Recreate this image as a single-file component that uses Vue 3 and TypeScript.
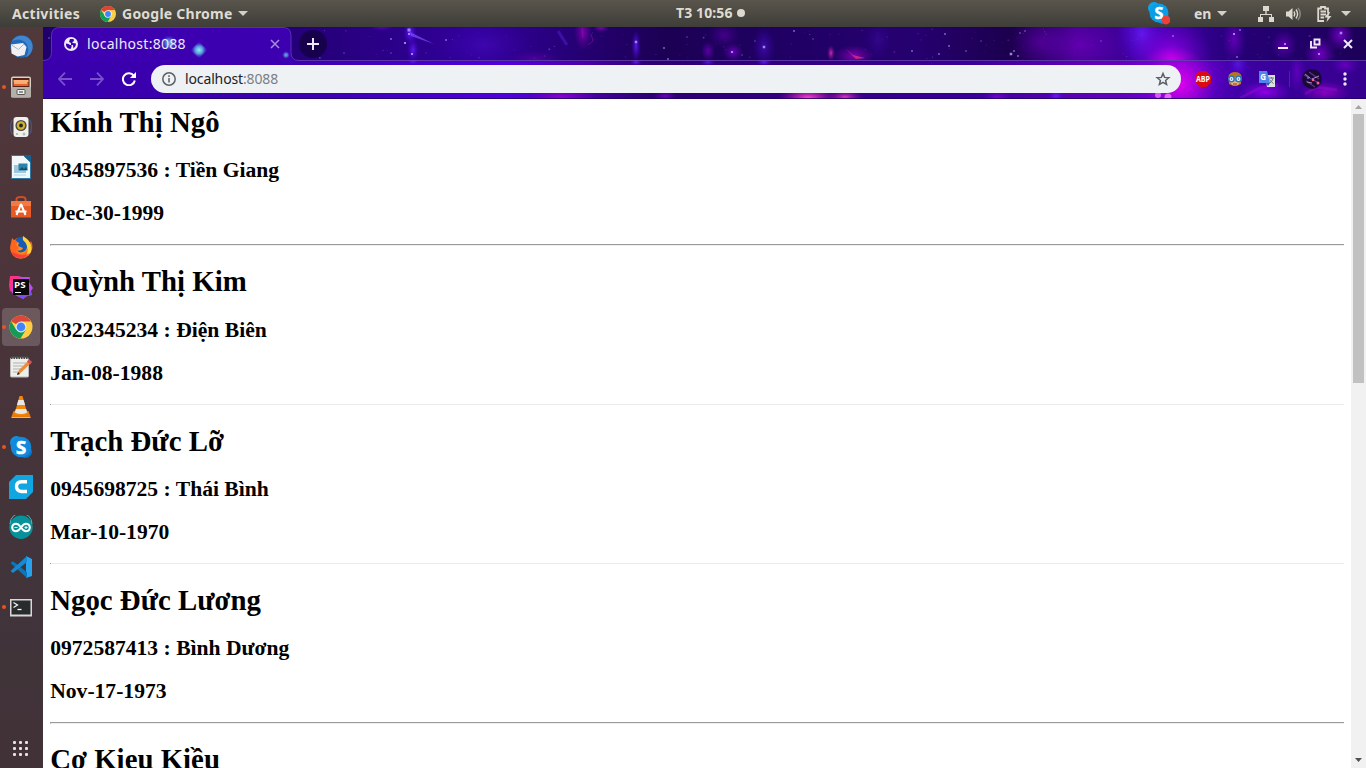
<script setup lang="ts">
interface Person {
  name: string
  phone: string
  city: string
  born: string
  faint: boolean
}

const people: Person[] = [
  { name: 'Kính Thị Ngô', phone: '0345897536', city: 'Tiền Giang', born: 'Dec-30-1999', faint: false },
  { name: 'Quỳnh Thị Kim', phone: '0322345234', city: 'Điện Biên', born: 'Jan-08-1988', faint: true },
  { name: 'Trạch Đức Lỡ', phone: '0945698725', city: 'Thái Bình', born: 'Mar-10-1970', faint: true },
  { name: 'Ngọc Đức Lương', phone: '0972587413', city: 'Bình Dương', born: 'Nov-17-1973', faint: false },
  { name: 'Cơ Kieu Kiều', phone: '', city: '', born: '', faint: false },
]

interface Glow { x: number; y: number; rx: number; ry: number; c: string; o: number }

const stripGlows: Glow[] = [
  { x: 382, y: 26, rx: 12, ry: 5, c: 'violet', o: 0.6 },
  { x: 410, y: 33, rx: 7, ry: 12, c: 'blue', o: 0.9 },
  { x: 413, y: 50, rx: 6, ry: 12, c: 'blue', o: 0.8 },
  { x: 485, y: 45, rx: 50, ry: 24, c: 'blue', o: 0.2 },
  { x: 535, y: 60, rx: 25, ry: 10, c: 'magenta', o: 0.2 },
  { x: 583, y: 32, rx: 9, ry: 18, c: 'magenta', o: 0.45 },
  { x: 601, y: 28, rx: 8, ry: 4, c: 'magenta', o: 0.5 },
  { x: 636, y: 46, rx: 5, ry: 16, c: 'blue', o: 0.8 },
  { x: 708, y: 51, rx: 7, ry: 10, c: 'violet', o: 0.5 },
  { x: 724, y: 35, rx: 16, ry: 13, c: 'violet', o: 0.3 },
  { x: 733, y: 52, rx: 10, ry: 9, c: 'violet', o: 0.6 },
  { x: 764, y: 47, rx: 12, ry: 20, c: 'blue', o: 0.4 },
  { x: 831, y: 53, rx: 4, ry: 8, c: 'pink', o: 0.7 },
  { x: 854, y: 56, rx: 20, ry: 11, c: 'magenta', o: 0.5 },
  { x: 878, y: 40, rx: 15, ry: 20, c: 'blue', o: 0.2 },
  { x: 1040, y: 42, rx: 28, ry: 22, c: 'violet', o: 0.3 },
  { x: 1080, y: 45, rx: 42, ry: 28, c: 'violet', o: 0.35 },
  { x: 1142, y: 34, rx: 26, ry: 34, c: 'blue', o: 0.8 },
  { x: 1170, y: 55, rx: 42, ry: 36, c: 'violet', o: 0.9 },
  { x: 1172, y: 60, rx: 28, ry: 14, c: 'magenta', o: 0.8 },
  { x: 1234, y: 40, rx: 12, ry: 24, c: 'violet', o: 0.5 },
  { x: 1284, y: 45, rx: 13, ry: 15, c: 'violet', o: 0.5 },
  { x: 1320, y: 54, rx: 16, ry: 18, c: 'violet', o: 0.65 },
  { x: 1340, y: 35, rx: 14, ry: 16, c: 'violet', o: 0.65 },
]

const toolbarGlows: Glow[] = [
  { x: 413, y: 61, rx: 6, ry: 4, c: 'blue', o: 0.8 },
  { x: 636, y: 62, rx: 6, ry: 4, c: 'blue', o: 0.9 },
  { x: 562, y: 97, rx: 35, ry: 10, c: 'magenta', o: 0.45 },
  { x: 708, y: 62, rx: 8, ry: 5, c: 'blue', o: 0.7 },
  { x: 764, y: 62, rx: 8, ry: 4, c: 'blue', o: 0.9 },
  { x: 665, y: 96, rx: 12, ry: 5, c: 'violet', o: 0.6 },
  { x: 808, y: 98, rx: 30, ry: 12, c: 'pink', o: 1 },
  { x: 845, y: 97, rx: 18, ry: 7, c: 'pink', o: 0.8 },
  { x: 997, y: 97, rx: 14, ry: 7, c: 'violet', o: 0.6 },
  { x: 1056, y: 96, rx: 9, ry: 7, c: 'blue', o: 0.9 },
  { x: 1172, y: 78, rx: 60, ry: 46, c: 'violet', o: 1 },
  { x: 1180, y: 84, rx: 36, ry: 36, c: 'magenta', o: 1 },
  { x: 1265, y: 92, rx: 26, ry: 12, c: 'violet', o: 0.9 },
  { x: 1238, y: 64, rx: 11, ry: 16, c: 'blue', o: 0.6 },
  { x: 1325, y: 92, rx: 26, ry: 12, c: 'magenta', o: 0.5 },
  { x: 1297, y: 72, rx: 8, ry: 22, c: 'violet', o: 0.4 },
  { x: 1345, y: 65, rx: 14, ry: 10, c: 'violet', o: 0.5 },
]

const brightStars: [number, number, number][] = [
  [409, 30, 3], [409, 34, 2], [412, 54, 2], [391, 53, 1], [405, 43, 2], [446, 40, 1.5], [391, 39, 1.5],
  [636, 42, 2.5], [664, 48, 1.5], [732, 52, 2], [742, 55, 1], [755, 41, 1], [668, 59, 1.5], [687, 37, 1],
  [764, 47, 2.5], [794, 31, 1.5], [813, 39, 1], [912, 51, 1.5], [945, 34, 1.5], [949, 46, 1.5],
  [939, 54, 1.5], [966, 51, 1.2], [981, 41, 1], [1011, 54, 2.5], [1014, 51, 1.5], [1018, 56, 1.5],
  [1025, 31, 1.2], [1020, 33, 1.2], [1234, 34, 2], [1240, 30, 1.5], [1237, 57, 1.5], [1173, 36, 1.5],
  [1285, 44, 2], [1341, 33, 2.5], [1319, 54, 2], [1101, 41, 1], [49, 38, 1.2], [344, 53, 1],
]

// Small deterministic generator for the faint star dust in the tab strip.
let seed = 71
function rnd(): number {
  seed = (seed * 16807) % 2147483647
  return seed / 2147483647
}
const dust = Array.from({ length: 130 }, () => ({
  x: 300 + rnd() * 1066,
  y: 28 + rnd() * 31,
  s: rnd() > 0.85 ? 1.6 : 1,
  c: rnd() > 0.7 ? '#7b5bd8' : '#6a22b8',
  o: 0.2 + rnd() * 0.5,
}))

const gridDots = [0, 1, 2, 3, 4, 5, 6, 7, 8]
</script>

<template>
  <div class="desktop">
    <header class="topbar">
      <span class="activities">Activities</span>
      <svg class="chrome-small" width="16" height="16" viewBox="0 0 24 24">
        <circle cx="12" cy="12" r="12" fill="#f9cf4a" />
        <path d="M12 12 1.6 6A12 12 0 0 1 22.4 6L12 6.4Z" fill="#db4437" />
        <path d="M1.6 6A12 12 0 0 0 11.5 24l5.3-9.2L12 12 7 14.5Z" fill="#0f9d58" />
        <circle cx="12" cy="12" r="5.6" fill="#f4f4f4" /><circle cx="12" cy="12" r="4.4" fill="#4285f4" />
      </svg>
      <span class="appname">Google Chrome</span>
      <i class="caret"></i>
      <div class="clock"><span>T3 10:56</span><i></i></div>
      <div class="tray">
        <svg class="t-skype" width="22" height="23" viewBox="0 0 22 23">
          <circle cx="6" cy="6" r="6" fill="#0aa5ec" /><circle cx="15" cy="16" r="6" fill="#0a83d8" />
          <circle cx="11" cy="11" r="9.5" fill="#0b9de6" />
          <text x="11" y="16.5" text-anchor="middle" class="ic" font-size="16" fill="#fff" stroke="#fff" stroke-width=".5">S</text>
          <circle cx="18" cy="18" r="4.4" fill="#ee4037" />
        </svg>
        <span class="lang">en</span>
        <i class="caret t-c1"></i>
        <svg class="t-net" width="16" height="16" viewBox="0 0 16 16" fill="#dcd8d0">
          <path d="M5 0h6v5H8.7v3H14v3h2v5h-5v-5h2V9H3v2h2v5H0v-5h2V8h5.3V5H5Z" />
        </svg>
        <svg class="t-vol" width="16" height="14" viewBox="0 0 16 14" fill="none" stroke="#dcd8d0" stroke-width="1.4">
          <path d="M0 4.5h2.5L6.5 1v12L2.5 9.5H0Z" fill="#dcd8d0" stroke="none" />
          <path d="M8 4.5q1.6 2.5 0 5M10 2.5q3.2 4.500 0 9" /><path d="M12 .8q4.500 6.200 0 12.400" stroke="#8f8b84" />
        </svg>
        <svg class="t-bat" width="15" height="16" viewBox="0 0 15 16" fill="none" stroke="#dcd8d0" stroke-width="1.8">
          <path d="M7 15H1.200V2.500H4V1h4v1.500h3V7M3.500 5.500H9M3.500 8.500H9M3.500 11.500H7" />
          <path d="M11.500 6 7.500 11.500h3L9.500 16l5-6h-3L13 6Z" fill="#dcd8d0" stroke="none" />
        </svg>
        <i class="caret t-c2"></i>
      </div>
    </header>

    <div class="body">
      <nav class="dock">
        <div class="slot">
          <svg viewBox="0 0 24 24">
            <circle cx="12.500" cy="11.500" r="11.300" fill="#2368b5" />
            <path d="M3 6Q9-2 18 2q6 4 5.500 11-1 7-7 9.500Q22 15 17 8 11 2 3 6Z" fill="#4087d2" />
            <path d="M2 9.500 14 8l3.500 4-2 8-7 1.500-6-3Z" fill="#f1f1f4" /><path d="m2.500 10 7 4.500L15 9" fill="none" stroke="#aab4c6" />
          </svg>
        </div>
        <div class="slot run">
          <svg viewBox="0 0 24 24">
            <rect x="2" y="1.500" width="20" height="21" rx="2" fill="#d5d2cc" /><rect x="3.500" y="3" width="17" height="10" fill="#54241a" />
            <path d="M4.500 5h15v2h-15Z" fill="#ffae73" /><path d="M4.500 7h15v4h-15Z" fill="#e96420" /><path d="M5 7.500h13v1H5Z" fill="#fff0d8" />
            <rect x="2" y="12" width="20" height="10.500" rx="1" fill="#b3b0aa" />
            <rect x="8" y="14.500" width="8" height="5" rx="1" fill="#eee" stroke="#57544f" /><path d="M10 17h4" stroke="#333" />
          </svg>
        </div>
        <div class="slot">
          <svg viewBox="0 0 24 24">
            <path d="M3 5q-3 7 0 14M21 5q3 7 0 14" fill="none" stroke="#46587c" stroke-width="1.300" />
            <rect x="4.500" y="2" width="15" height="20" rx="3" fill="#efefec" /><circle cx="12" cy="10.500" r="5.600" fill="#4c4b47" />
            <circle cx="12" cy="10.500" r="4.200" fill="#d2b32d" /><circle cx="12" cy="10.500" r="1.900" fill="#252525" />
            <circle cx="8" cy="19" r="1" fill="#aaa" /><circle cx="15" cy="19" r="1.500" fill="#bbb" />
          </svg>
        </div>
        <div class="slot">
          <svg viewBox="0 0 24 24">
            <path d="M2.500 .5h12L21.500 7v16.500h-19Z" fill="#f2f7fa" stroke="#2c78a6" />
            <path d="M14.500 0H22v8Z" fill="#17618f" />
            <rect x="5" y="10" width="12" height="8" fill="#9cc7dd" /><rect x="9.500" y="8.500" width="9" height="7" fill="#2b83a9" />
            <path d="m10 15 3-3 2 2 2-2 1.500 3Z" fill="#174e6e" /><path d="M5 20h12" stroke="#b5d3e2" />
          </svg>
        </div>
        <div class="slot">
          <svg viewBox="0 0 24 24">
            <path d="M7.500 7V4q0-2 4.500-2t4.500 2v3" fill="none" stroke="#d34e1e" stroke-width="2" />
            <path d="M2 6h20v6H2Z" fill="#f27b43" /><path d="M2 11h20v11.500H2Z" fill="#e75a24" />
            <path d="m12 9-4.500 11M12 9l4.500 11M6.500 16.500h11" fill="none" stroke="#fff" stroke-width="2" />
          </svg>
        </div>
        <div class="slot">
          <svg viewBox="0 0 24 24">
            <circle cx="12" cy="13" r="10.500" fill="#ff8a19" />
            <path d="M2 8 3 3l3 3 4-1-3 5 3 3-3 3q4 5 9 2 3-3 4-8l2-4q3 6 0 11-4 6-10 6.500-6 0-9-4.500-3-5-1-11Z" fill="#ff641f" />
            <path d="M14 1q8 5 8.500 12 0 7-6.500 9 5-7 1-12-5-4-3-9Z" fill="#ffd23c" />
            <path d="M6 5q4-4 8-3-1 3 2 5 4 5 0 9-5 3-8-.5 5 .5 6-2.500l-5-2 1-3Z" fill="#145cb8" /><path d="M2 17q3 6 10 6 6 0 9-5-7 4-13 1Z" fill="#fb3147" opacity=".8" />
          </svg>
        </div>
        <div class="slot">
          <svg viewBox="0 0 24 24">
            <path d="M1 1 9 1l4 1 8 0-1 5 4 6-2 3 1 4-5 1-4 3-10-5-2-3 0-5Z" fill="#bd4bed" />
            <path d="m1 1 8 0 3 3-8 8-3 5-1-7Z" fill="#fb318c" /><path d="m9 21 11-8 3 7-5 1-4 3Z" fill="#7650f7" />
            <rect x="4" y="4" width="16" height="16" fill="#0b080c" />
            <text x="5" y="12.800" class="ic" font-size="9" textLength="11.500" lengthAdjust="spacingAndGlyphs" fill="#fff">PS</text><path d="M6 17.500h6" stroke="#fff" />
          </svg>
        </div>
        <div class="slot run active">
          <svg viewBox="0 0 24 24">
            <circle cx="12" cy="12" r="11.500" fill="#ffce44" />
            <path d="M12 12 2 6.200A11.500 11.500 0 0 1 22 6.500H12Z" fill="#d8493c" />
            <path d="M2 6.200A11.500 11.500 0 0 0 11.500 23.500l5.300-8.700L12 12 7 14.500Z" fill="#169b57" />
            <circle cx="12" cy="12" r="5.400" fill="#eef3fb" /><circle cx="12" cy="12" r="4.400" fill="#4285f4" />
          </svg>
        </div>
        <div class="slot">
          <svg viewBox="0 0 24 24">
            <rect x="1.500" y="3" width="18" height="19" rx="1" fill="#eeeeeb" stroke="#bbb" />
            <path d="M2 2.500h18" stroke="#4a4a48" stroke-width="3" stroke-dasharray="1.500 1" />
            <path d="M4 8h13M4 11h10M4 14h8M4 17h6" stroke="#b1b1ae" />
            <path d="m8 20 2-5L20 5l2.500 2.500-11 10.500Z" fill="#ef8b37" /><path d="m18 6.500 2-2.500 3 3-2 2.500Z" fill="#d55555" /><path d="m8 20 1-3 2 2Z" fill="#222" />
          </svg>
        </div>
        <div class="slot">
          <svg viewBox="0 0 24 24">
            <path d="M4.500 16h15l2.500 7H2Z" fill="#e87a08" /><path d="M10.500 1h3L18.500 19q-6.500 3-13 0Z" fill="#f38709" />
            <path d="M9.400 5h5.200l1.500 5H7.900ZM6.800 14h10.400l1 3.500q-6.200 3-12.400 0Z" fill="#e8e7e6" /><path d="M3 22.500h18" stroke="#ffb050" />
          </svg>
        </div>
        <div class="slot run">
          <svg viewBox="0 0 24 24">
            <circle cx="7.500" cy="7.500" r="6.500" fill="#168fde" /><circle cx="16.500" cy="16.500" r="6.500" fill="#0877c8" /><circle cx="12" cy="12" r="10.300" fill="#1289dc" />
            <text x="12" y="18.600" text-anchor="middle" class="ic" font-size="18.500" fill="#fff" stroke="#fff" stroke-width=".7">S</text>
          </svg>
        </div>
        <div class="slot">
          <svg viewBox="0 0 24 24">
            <path d="M7 0h17v17l-7 7H0V7Z" fill="#10a6e2" />
            <path d="M18 6.800h-5.500Q7.500 7 7.500 11.500t5 5H18" fill="none" stroke="#fff" stroke-width="3.400" />
          </svg>
        </div>
        <div class="slot">
          <svg viewBox="0 0 24 24">
            <circle cx="12" cy="12.300" r="11.700" fill="#07919a" /><path d="M1 9A11 11 0 0 1 23 9" fill="none" stroke="#50b7bc" />
            <path d="M12 12.500Q9.500 8.700 7 8.700a3.800 3.800 0 0 0 0 7.600Q9.500 16.300 12 12.500t5-3.800a3.800 3.800 0 0 1 0 7.600Q14.500 16.300 12 12.500Z" fill="none" stroke="#fff" stroke-width="2.100" />
            <path d="M5.500 12.500h3M15.500 12.500h3M17 11v3" stroke="#fff" />
          </svg>
        </div>
        <div class="slot">
          <svg viewBox="0 0 24 24">
            <path d="m17 1 6 3v17l-6 2Z" fill="#28a2ed" /><path d="M1.500 8 4 6.200l14 11V23Z" fill="#0878be" /><path d="M1.500 16 4 18 18 7V1Z" fill="#1589d1" />
          </svg>
        </div>
        <div class="slot run">
          <svg viewBox="0 0 24 24">
            <rect x="1" y="4" width="22" height="17.500" fill="#d8d8d6" /><rect x="2.500" y="5.500" width="19" height="14" fill="#282c2d" />
            <path d="m4.500 7.500 4 2.500-4 2.500" fill="none" stroke="#f4f4f4" stroke-width="1.300" /><path d="M8.500 14.500h4" stroke="#fff" stroke-width="1.300" />
          </svg>
        </div>
        <div class="apps"><i v-for="d in gridDots" :key="d"></i></div>
      </nav>

      <main class="browser">
        <div class="chrome">
          <svg class="galaxy" width="1323" height="72" viewBox="43 27 1323 72">
            <defs>
              <linearGradient id="strip" gradientUnits="userSpaceOnUse" x1="43" y1="0" x2="1366" y2="0">
                <stop offset="0" stop-color="#20006c" /><stop offset=".22" stop-color="#27007e" />
                <stop offset=".33" stop-color="#32009a" /><stop offset=".4" stop-color="#260076" />
                <stop offset=".47" stop-color="#1c0054" /><stop offset=".56" stop-color="#200064" />
                <stop offset=".66" stop-color="#260070" /><stop offset=".73" stop-color="#1c004e" />
                <stop offset=".78" stop-color="#44008e" /><stop offset=".85" stop-color="#3f00a8" />
                <stop offset=".9" stop-color="#260078" /><stop offset="1" stop-color="#1d0058" />
              </linearGradient>
              <linearGradient id="bar" gradientUnits="userSpaceOnUse" x1="43" y1="0" x2="1366" y2="0">
                <stop offset="0" stop-color="#3900ac" /><stop offset=".2" stop-color="#3c00b2" />
                <stop offset=".35" stop-color="#5000dc" /><stop offset=".41" stop-color="#4a00a8" />
                <stop offset=".46" stop-color="#2b0070" /><stop offset=".7" stop-color="#3a0099" />
                <stop offset=".8" stop-color="#6400bc" /><stop offset=".86" stop-color="#5700c4" />
                <stop offset=".92" stop-color="#3b009e" /><stop offset="1" stop-color="#36008e" />
              </linearGradient>
              <radialGradient id="violet"><stop offset="0" stop-color="#9a00f0" /><stop offset="1" stop-color="#7a00d8" stop-opacity="0" /></radialGradient>
              <radialGradient id="blue"><stop offset="0" stop-color="#6a20ff" /><stop offset="1" stop-color="#4a00e8" stop-opacity="0" /></radialGradient>
              <radialGradient id="magenta"><stop offset="0" stop-color="#e000f0" /><stop offset="1" stop-color="#b000d0" stop-opacity="0" /></radialGradient>
              <radialGradient id="pink"><stop offset="0" stop-color="#ff48c8" /><stop offset="1" stop-color="#c000a8" stop-opacity="0" /></radialGradient>
              <radialGradient id="cyan"><stop offset="0" stop-color="#8ff0ee" /><stop offset=".45" stop-color="#5a9ce0" /><stop offset="1" stop-color="#4032d0" stop-opacity="0" /></radialGradient>
              <clipPath id="upper"><rect x="43" y="27" width="1323" height="33" /></clipPath>
              <clipPath id="lower"><rect x="43" y="60" width="1323" height="39" /></clipPath>
            </defs>
            <rect x="43" y="27" width="1323" height="34" fill="url(#strip)" />
            <rect x="43" y="61" width="1323" height="38" fill="url(#bar)" />
            <g clip-path="url(#upper)">
              <ellipse v-for="(g, i) in stripGlows" :key="i" :cx="g.x" :cy="g.y" :rx="g.rx" :ry="g.ry" :fill="`url(#${g.c})`" :opacity="g.o" />
              <rect v-for="(d, i) in dust" :key="'d' + i" :x="d.x" :y="d.y" :width="d.s" :height="d.s" :fill="d.c" :opacity="d.o" />
              <path d="m410 32 24 12-23-8Z" fill="#7c50ff" opacity=".7" />
              <path d="m558 31 9 14" stroke="#4d1dce" stroke-width="3" opacity=".55" />
              <path d="m588 45 5-4-2-7M582 28l1 10" fill="none" stroke="#a0109f" opacity=".55" />
              <path d="m846 49 7 6 12 3-9 1Z" fill="#e4327f" opacity=".75" />
              <rect v-for="(s, i) in brightStars" :key="'s' + i" :x="s[0] - s[2] / 2" :y="s[1] - s[2] / 2" :width="s[2]" :height="s[2]" fill="#a99cff" opacity=".85" />
            </g>
            <g clip-path="url(#lower)">
              <ellipse v-for="(g, i) in toolbarGlows" :key="i" :cx="g.x" :cy="g.y" :rx="g.rx" :ry="g.ry" :fill="`url(#${g.c})`" :opacity="g.o" />
              <circle cx="1158" cy="95" r="3" fill="#ec70ff" opacity=".8" /><circle cx="1168" cy="97" r="3.500" fill="#f080ff" opacity=".8" />
              <path d="m1240 98 20-10 18-3M1305 94l12-7 20 3" fill="none" stroke="#9b10dc" stroke-width="3" opacity=".35" />
            </g>
            <path d="M43 60.500h1323" stroke="#6340ad" opacity=".85" />
            <path d="M43 61.500v-1q8.500 0 8.500-8V35.500q0-8 8-8H283q8 0 8 8v17q0 8 8 8v1Z" fill="#3c00b0" />
            <path d="M43 60.500q8.500 0 8.500-8V35.500q0-8 8-8H283q8 0 8 8v17q0 8 8 8" fill="none" stroke="#5a30b0" />
            <circle cx="169" cy="43" r="8" fill="url(#cyan)" opacity=".7" /><path d="m199 41.500 8.500 8.500-8.500 8.500-8.500-8.500Z" fill="url(#cyan)" />
            <circle cx="286" cy="55" r="4" fill="url(#cyan)" opacity=".7" />
            <path d="M43 98.500h1323" stroke="#1d0062" opacity=".8" />
          </svg>

          <div class="tabs">
            <svg class="globe" width="14" height="14" viewBox="0 0 14 14">
              <circle cx="7" cy="7" r="7" fill="#f1ecfb" />
              <path d="M1.800 6.500q3.200 0 4.200 1.500h1.500v2L6.500 12Q2 11.500 1.800 6.500ZM6 2h3.500l.5 2L8.500 5v1L12 6.500q.3 3-2.500 5L9 8H7V6L5 5Z" fill="#3c00b0" />
            </svg>
            <span class="tabtitle">localhost:8088</span>
            <svg class="tabx" width="10" height="10" viewBox="0 0 10 10" stroke="#a58bdc" stroke-width="1.600"><path d="m1 1 8 8m0-8L1 9" /></svg>
            <span class="plus"><svg width="12" height="12" viewBox="0 0 12 12" stroke="#eee9f8" stroke-width="2"><path d="M6 0v12M0 6h12" /></svg></span>
            <svg class="winbtns" width="76" height="14" viewBox="0 0 76 14" fill="none" stroke="#f0ebfa" stroke-width="2">
              <path d="M0 11h10" /><path d="M36.500 2.500h5v5h-5ZM33 4v6.500h6" stroke-width="1.900" /><path d="m66 3 8 8m0-8-8 8" />
            </svg>
          </div>

          <div class="toolbar">
            <svg class="nav" width="14" height="14" viewBox="0 0 14 14" fill="none" stroke="#7951ce" stroke-width="1.800"><path d="M14 7H1m6-6.300L1 7l6 6.300" /></svg>
            <svg class="nav" width="14" height="14" viewBox="0 0 14 14" fill="none" stroke="#7951ce" stroke-width="1.800"><path d="M0 7h13M7 .7 13 7l-6 6.300" /></svg>
            <svg class="reload" width="14" height="14" viewBox="0 0 14 14"><path d="M11.800 3.800A6 6 0 1 0 12.800 8.500" fill="none" stroke="#fff" stroke-width="2" /><path d="M14 0v6H8Z" fill="#fff" /></svg>
            <div class="omnibox">
              <svg width="14" height="14" viewBox="0 0 14 14" fill="none" stroke="#5c6066" stroke-width="1.500"><circle cx="7" cy="7" r="6.200" /><path d="M7 6v4.500M7 3.300v1.600" /></svg>
              <span class="url">localhost<em>:8088</em></span>
              <svg class="star" width="16" height="16" viewBox="0 0 16 16"><path d="m8 2.500 1.600 3.900 4.200.3-3.200 2.700 1 4.100L8 11.300l-3.600 2.200 1-4.100-3.200-2.700 4.200-.3Z" fill="none" stroke="#5a6069" stroke-width="1.500" /></svg>
            </div>
            <svg class="abp" width="16" height="16" viewBox="0 0 16 16">
              <path d="M4.700 0h6.600L16 4.700v6.600L11.300 16H4.700L0 11.300V4.700Z" fill="#db0b15" />
              <text x="1" y="11.200" class="ic" font-size="8.800" textLength="14" lengthAdjust="spacingAndGlyphs" fill="#fff">ABP</text>
            </svg>
            <svg class="face" width="16" height="16" viewBox="0 0 16 16">
              <path d="M1.500 5Q3 1 8 1t6.500 4l-.5 8-3 1.500H5L2 13Z" fill="#b87520" /><path d="M3.500 6h9v6L10 14.500H6L3.500 12Z" fill="#edb179" />
              <circle cx="4.500" cy="8" r="2.700" fill="#edf7ff" stroke="#2877b9" stroke-width="1.500" /><circle cx="11.500" cy="8" r="2.700" fill="#edf7ff" stroke="#2877b9" stroke-width="1.500" />
              <circle cx="4.500" cy="8" r=".8" fill="#2a5a88" /><circle cx="11.500" cy="8" r=".8" fill="#2a5a88" /><path d="M6 13h4" stroke="#a22b2b" />
            </svg>
            <svg class="translate" width="16" height="16" viewBox="0 0 16 16">
              <path d="M6 4h10v12H8Z" fill="#dce0e3" /><path d="M0 0h8l3 12H0Z" fill="#4f86ec" /><path d="m7 12h4l-2 3Z" fill="#3456a8" />
              <text x="1.200" y="9.200" class="ic" font-size="8" fill="#fff">G</text><path d="M10 7h5M12.500 6v1.500M14 7.500q-1 4-4 5M10.500 8.500q2 3 4 4" fill="none" stroke="#6e7880" />
            </svg>
            <i class="sep"></i>
            <svg class="avatar" width="20" height="20" viewBox="0 0 20 20">
              <circle cx="10" cy="10" r="10" fill="#190a38" /><path d="m2 6 15 8M4 12l9 6M7 3l10 7" stroke="#5d3480" stroke-width="1.300" />
              <path d="m3 5 5 4m2 1 7-3M5 13l5 1" stroke="#b886c8" /><circle cx="11" cy="11" r="1.300" fill="#ff5b84" /><circle cx="16" cy="14" r="1.500" fill="#ec5aa5" /><circle cx="6" cy="9" r="1" fill="#5e73df" />
            </svg>
            <svg class="more" width="4" height="14" viewBox="0 0 4 14" fill="#eee6fb"><circle cx="2" cy="2" r="1.700" /><circle cx="2" cy="7" r="1.700" /><circle cx="2" cy="12" r="1.700" /></svg>
          </div>
        </div>

        <div class="viewport">
          <div class="page">
            <section v-for="p in people" :key="p.name" class="record">
              <h1>{{ p.name }}</h1>
              <template v-if="p.phone">
                <h2>{{ p.phone }} : {{ p.city }}</h2>
                <h2>{{ p.born }}</h2>
                <div class="rule" :class="{ faint: p.faint }"></div>
              </template>
            </section>
          </div>
          <div class="scrollbar">
            <svg width="15" height="15" viewBox="0 0 15 15"><path d="M4 10h7L7.500 6Z" fill="#a3a3a3" /></svg>
            <div class="thumb"></div>
            <svg class="down" width="15" height="15" viewBox="0 0 15 15"><path d="M4 5h7L7.500 9Z" fill="#505050" /></svg>
          </div>
        </div>
      </main>
    </div>
  </div>
</template>

<style>
html, body { margin: 0; overflow: hidden; background: #fff; }
</style>

<style scoped>
* { box-sizing: border-box; }
svg { display: block; flex: none; }
.ic { font-family: "Open Sans", "Noto Sans", sans-serif; font-weight: 700; }
.desktop { width: 1366px; height: 768px; overflow: hidden; display: flex; flex-direction: column; }
.topbar {
  height: 27px; flex: none; display: flex; align-items: center; position: relative;
  background: linear-gradient(#59554c, #3e3d38); color: #dfdbd2;
  font: 700 14px/27px "Noto Sans", sans-serif; white-space: nowrap;
}
.activities { margin-left: 12px; width: 88px; letter-spacing: .3px; }
.appname { margin-left: 6px; width: 111px; letter-spacing: .24px; }
.caret { width: 0; height: 0; margin-left: 5px; border: 5px solid transparent; border-top-color: #d4d0c7; border-bottom: 0; flex: none; }
.clock { position: absolute; left: 676px; top: 0; display: flex; align-items: center; height: 26px; line-height: 26px; letter-spacing: .1px; }
.clock span { width: 58px; }
.clock i { width: 8px; height: 8px; border-radius: 50%; background: #dcd8d0; margin-left: 3px; }
.tray { margin-left: auto; display: flex; align-items: center; padding-right: 15px; }
.lang { margin-left: 24px; width: 19px; }
.t-c1 { margin-left: 4px; }
.t-net { margin-left: 31px; }
.t-vol { margin-left: 12px; }
.t-bat { margin-left: 15px; }
.t-c2 { margin-left: 9px; }

.body { flex: 1; display: flex; min-height: 0; }
.dock { width: 43px; flex: none; display: flex; flex-direction: column; background: linear-gradient(#51383b, #49343a 45%, #41343a 75%, #403237); }
.slot { height: 40px; flex: none; display: flex; align-items: center; padding-left: 9px; position: relative; }
.slot svg { width: 24px; height: 24px; position: relative; }
.run::before { content: ""; position: absolute; left: 2px; top: 18px; width: 4px; height: 4px; border-radius: 50%; background: #e95420; z-index: 1; }
.active::after { content: ""; position: absolute; left: 2px; top: 1px; width: 38px; height: 38px; border-radius: 4px; background: rgba(255, 255, 255, .18); }
.active svg { z-index: 1; }
.apps { margin: auto 0 12px 13px; display: grid; grid-template-columns: repeat(3, 3px); gap: 3px; }
.apps i { width: 3px; height: 3px; border-radius: 1px; background: #e5e2e2; }

.browser { flex: 1; min-width: 0; display: flex; flex-direction: column; }
.chrome { height: 72px; flex: none; position: relative; font-family: "Noto Sans", sans-serif; }
.galaxy { position: absolute; left: 0; top: 0; }
.tabs, .toolbar { position: relative; display: flex; align-items: center; }
.tabs { height: 34px; }
.globe { margin-left: 21px; }
.tabtitle { margin-left: 9px; width: 183px; padding-bottom: 1px; color: #eee8fb; font-size: 14px; letter-spacing: .28px; }
.plus { width: 28px; height: 28px; margin-left: 19px; border-radius: 50%; background: rgba(16, 0, 50, .65); display: flex; align-items: center; justify-content: center; }
.winbtns { margin-left: auto; margin-right: 12px; }
.toolbar { height: 38px; padding-bottom: 2px; }
.nav:first-child { margin-left: 15px; }
.nav + .nav { margin-left: 18px; }
.reload { margin-left: 18px; }
.omnibox { width: 1030px; height: 28px; margin-left: 15px; border-radius: 14px; background: #eff2f4; display: flex; align-items: center; padding: 0 10px 0 11px; }
.url { margin-left: 9px; padding-bottom: 1px; font-size: 14px; letter-spacing: -.13px; color: #202124; }
.url em { font-style: normal; color: #7b8086; }
.star { margin-left: auto; }
.abp { margin-left: 14px; }
.face { margin-left: 16px; }
.translate { margin-left: 16px; }
.sep { width: 1px; height: 16px; margin-left: 14px; background: #6414b0; }
.avatar { margin-left: 12px; }
.more { margin-left: 21px; }

.viewport { flex: 1; min-height: 0; display: flex; background: #fff; }
.page { flex: 1; overflow: hidden; padding: 7px 7px 0 7.200px; font-family: "Liberation Serif", "Times New Roman", serif; color: #000; }
.record { height: 159.300px; }
h1, h2 { margin: 0; font-weight: 700; white-space: nowrap; }
h1 { font-size: 28.800px; line-height: 33px; margin-bottom: 19.300px; letter-spacing: .02px; }
h2 { font-size: 21.600px; line-height: 25px; margin-bottom: 18px; }
.rule { height: 2px; border-top: 1px solid #9a9a9a; border-bottom: 1px solid #eee; border-left: 1px solid #9a9a9a; }
.rule.faint { height: 1px; border-top: 0; border-bottom: 0; background: #ececec; }
.scrollbar { width: 15px; flex: none; background: #f1f1f1; display: flex; flex-direction: column; }
.thumb { width: 11px; height: 269px; margin-left: 2px; background: #c1c1c1; }
.down { margin-top: auto; }
</style>
